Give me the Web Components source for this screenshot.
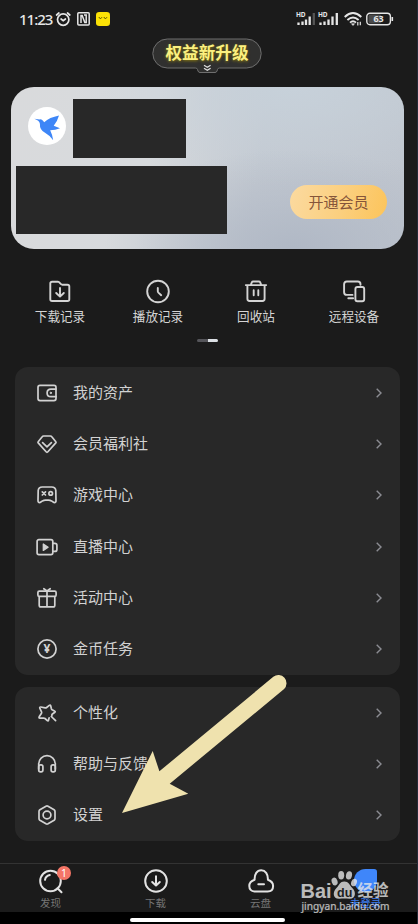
<!DOCTYPE html>
<html lang="zh-CN">
<head>
<meta charset="utf-8">
<title>我的</title>
<style>
body {
    margin: 0;
    background: #1b1b1b;
}
</style>
</head>
<body>
<profile-page></profile-page>

<script>
const ICONS = {
    folder: '<path d="M2.3 3.5q0-1.8 1.8-1.8h5.6q.8 0 1.3.5l2 2q.5.5 1.3.5h5.2q1.8 0 1.8 1.8v12.7q0 1.8-1.8 1.8H4.1q-1.8 0-1.8-1.8z"/><path d="M12 8v8.4M8.2 13l3.8 3.6 3.8-3.6"/>',
    clock: '<circle cx="12" cy="11.5" r="10.8"/><path d="M11.8 8v3.2q0 .8.6 1.4l2.8 2.6"/>',
    trash: '<path d="M1.8 5.1h20.4M6.8 4.8l1-2.4q.4-.9 1.4-.9h5.6q1 0 1.4.9l1 2.4M3.4 5.4v13.4q0 2.2 2.2 2.2h12.8q2.2 0 2.2-2.2V5.4M9.7 10.3v5M14.3 10.3v5"/>',
    devices: '<path d="M10.5 14.9H4.8q-2.7 0-2.7-2.7v-8q0-2.7 2.7-2.7h11q2.7 0 2.7 2.7v.6M6.3 18.2h4.8"/><rect x="13.4" y="7" width="8.8" height="14.2" rx="2"/>',
    wallet: '<rect x="3" y="4.4" width="18" height="15.2" rx="2"/><path d="M21 8.1h-5q-3.9 0-3.9 3.8t3.9 3.8h5"/><circle cx="15.8" cy="11.9" r=".7" fill="currentColor" stroke-width="1"/>',
    diamond: '<path d="M8.6 4h6.8q.9 0 1.4.7l4 5q.5.6 0 1.2l-7.9 8.9q-.9 1-1.8 0l-7.9-8.9q-.5-.6 0-1.2l4-5q.5-.7 1.4-.7zM7.6 10.7l4.4 4.1 4.4-4.1"/>',
    game: '<path d="M7.2 4h9.6q3.5 0 4 3.4l.2 10q.1 2.600-2.100 2.100l-2.400-1.600q-1.400-.8-3-.8h-3q-1.600 0-3 .8l-2.400 1.600q-2.200.5-2.100-2.100l.2-10Q3.700 4 7.200 4z"/><path d="M7.300 8.800l3.200 3.200M10.500 8.800L7.300 12" stroke-width="1.700"/><circle cx="15.700" cy="10.400" r="1.800" stroke-width="1.700"/>',
    live: '<rect x="2.1" y="4.600" width="15.700" height="15" rx="1.800"/><path d="M18 8.400h1.900q2 0 2 2v4q0 2-2 2H18"/><path d="M8.300 9v6.400l4.800-3.200z" fill="currentColor" stroke-width="1.300"/>',
    gift: '<rect x="2.900" y="5.200" width="18.200" height="5.200" rx="1.400"/><path d="M4.200 10.600v8.600q0 1.700 1.700 1.700h12.200q1.700 0 1.700-1.700v-8.600M12 5.500v15.200M8.800 2.700L12 5l3.200-2.300"/>',
    coin: '<circle cx="12" cy="12" r="9.100"/><text x="12" y="16.300" text-anchor="middle" font-family="Noto Sans, sans-serif" font-size="12" font-weight="700" fill="currentColor" stroke="none">¥</text>',
    star: '<path d="M16.900 14.600Q16.700 13.600 17.400 13L19.900 11.200Q20.600 10.600 19.800 10.200L17.200 8.800Q16.600 8.400 16.400 7.700L15.700 4.700Q15.300 3.500 14.300 4.300L11.600 6.500Q11 7 10.200 6.900L5.800 6Q4.400 5.900 4.800 7.100L6.500 10.800Q6.800 11.500 6.500 12.200L4.200 15.800Q3.600 17 4.900 17.100L8.600 17Q9.400 17 10 17.500L12.300 19.600Q13.200 20.300 13.500 19.200L14.100 16.900M16.300 15.500l4.300 4.200"/>',
    headset: '<path d="M3.700 17v-5a8.300 8.300 0 0 1 16.600 0v5"/><rect x="3.700" y="12.900" width="4.200" height="7" rx="1.800"/><rect x="16.100" y="12.900" width="4.200" height="7" rx="1.800"/>',
    setting: '<path d="M11 3.200q1-.5 2 0l6.100 3.500q.9.600.9 1.700v7.200q0 1.100-.9 1.700L13 20.800q-1 .5-2 0l-6.100-3.500q-.9-.6-.9-1.700V8.400q0-1.100.9-1.700z"/><circle cx="12" cy="12" r="3.900"/>',
    discover: '<circle cx="11.500" cy="12" r="10.300"/><path d="M18.500 19.300l4 4M6 10.800q.6-3.800 4.800-4.800"/>',
    download: '<circle cx="12" cy="12" r="10.800"/><path d="M12 7.200v9.200M8.200 13l3.800 3.600 3.800-3.600"/>',
    cloud: '<path d="M5.600 10.700C5.400 4.900 8 1.300 12.200 1.300s6.900 3.600 6.700 9.400c3.300 1.200 5.200 3.200 5.200 6.200 0 3.500-2.300 5.500-5.500 5.500H5.400C2.200 22.400.300 20.200.300 17c0-3.200 2-5.200 5.300-6.300z"/><path d="M9.300 15.200h5.700"/>',
};

class LineIcon extends HTMLElement {
    connectedCallback() {
        this.attachShadow({ mode: 'open' });
        this.shadowRoot.innerHTML = `
        <style>
            :host {
                display: block;
                width: 24px;
                height: 24px;
                flex: none;
            }
            svg {
                display: block;
                overflow: visible;
                fill: none;
                stroke: currentColor;
                stroke-width: ${this.getAttribute('weight') || 1.7};
                stroke-linecap: round;
                stroke-linejoin: round;
            }
        </style>
        <svg width="24" height="24" viewBox="0 0 24 24">${ICONS[this.getAttribute('name')]}</svg>
        `;
    }
}

class StatusBar extends HTMLElement {
    constructor() {
        super();
        this.attachShadow({ mode: 'open' });
    }

    connectedCallback() {
        this.shadowRoot.innerHTML = `
        <style>
            :host {
                display: flex;
                align-items: center;
                justify-content: space-between;
                box-sizing: border-box;
                height: 38px;
                padding: 0 23px 0 19px;
                color: #e6e6e6;
            }
            div {
                display: flex;
                align-items: center;
            }
            .time {
                font: 500 15px/20px "Noto Sans", sans-serif;
                letter-spacing: -1px;
                width: 36px;
                white-space: nowrap;
            }
            svg {
                display: block;
                overflow: visible;
                fill: none;
                stroke: currentColor;
            }
            .nfc { margin-left: 6px; }
            .app { margin-left: 6px; }
            .right { gap: 4.5px; }
            text {
                font: 700 6.5px "Noto Sans", sans-serif;
                fill: currentColor;
                stroke: none;
            }
            .level {
                font-size: 9px;
            }
        </style>
        <div>
            <span class="time">11:23</span>
            <svg width="16" height="16" viewBox="0 0 16 16" stroke-width="1.7" stroke-linecap="round">
                <circle cx="8.2" cy="8.6" r="5.7"/>
                <path d="M1.6 4l2.3-2M14.8 4l-2.3-2M6.1 8l2.1 1.6 2.2-1.6"/>
            </svg>
            <svg class="nfc" width="13" height="14" viewBox="0 0 13 14" stroke-width="1.5">
                <rect x=".8" y=".8" width="11.4" height="12.2" rx="1"/>
                <path d="M4 11V3.600h1.200l2.600 6.800H9.200V3H7"/>
            </svg>
            <svg class="app" width="14" height="14" viewBox="0 0 14 14">
                <rect width="14" height="14" rx="3.2" fill="#fbe106" stroke="none"/>
                <path d="M2.800 5l1.600 1.900L6 5.200M7.800 5l1.600 1.900L11 5.200" stroke="#5b5200"/>
            </svg>
        </div>
        <div class="right">
            <svg width="18" height="14" viewBox="0 0 18 14">
                <text x="-1" y="5" textLength="9.5">HD</text>
                <path d="M1.500 13v-2.500M5.500 13V9.500M9 13V7.500M12.700 13V4.500" stroke-width="2.3"/>
                <path d="M16.800 13V1" stroke-width="2.3" stroke="#555"/>
            </svg>
            <svg width="20" height="14" viewBox="0 0 20 14">
                <text x="-1" y="5" textLength="9.5">HD</text>
                <path d="M1.500 13v-2.500M5.500 13V9.500M9.500 13V7.500M13.500 13V4.500M17.800 13V1" stroke-width="2.3"/>
            </svg>
            <svg width="18" height="14" viewBox="0 0 18 14" stroke-width="1.9">
                <path d="M.7 5q8.300-7.800 16.600 0M3.400 8q5.600-5 11.200 0M6 10.600q3-2.600 6 0"/>
                <path d="M7.400 11.700h3.200L9 13.600z" fill="currentColor" stroke-width=".5"/>
                <path d="M13.800 10v3.500M16.300 9.800v3.500" stroke-width="1.2"/>
            </svg>
            <svg width="28" height="14" viewBox="0 0 28 14">
                <rect x="2.500" y="2.500" width="13" height="9" rx="2" fill="#4a4a4a" stroke="none"/>
                <rect x=".8" y="1.300" width="23.600" height="11.400" rx="3.200" stroke-width="1.4"/>
                <path d="M26.300 5v4" stroke-width="1.6"/>
                <text class="level" x="12.600" y="10.300" text-anchor="middle">63</text>
            </svg>
        </div>
        `;
    }
}

class PromoPill extends HTMLElement {
    constructor() {
        super();
        this.attachShadow({ mode: 'open' });
    }

    connectedCallback() {
        this.shadowRoot.innerHTML = `
        <style>
            :host {
                display: grid;
                justify-content: center;
                height: 49px;
                margin-right: 3px;
            }
            svg, span {
                grid-area: 1 / 1;
            }
            span {
                font: 700 16.6px/29px "Noto Sans CJK SC", sans-serif;
                color: #fbf080;
                text-align: center;
                text-shadow: 0 1px 3px #8a7a10;
                z-index: 1;
            }
        </style>
        <svg width="110" height="36" viewBox="0 0 110 36" fill="none">
            <path d="M15.300 1h79.400a14.500 14.500 0 0 1 0 29H67.500q-1.500 0-2 1.500l-.5 1.500q-.5 1.500-2 1.500H48q-1.500 0-2-1.500l-.5-1.500q-.5-1.500-2-1.500H15.300a14.500 14.500 0 0 1 0-29z" fill="#30302f" stroke="#6f6f6f"/>
            <path d="M52 27.300l3.300 2 3.300-2M52 30.300l3.300 2 3.300-2" stroke="#ddd" stroke-width="1.3"/>
        </svg>
        <span><slot></slot></span>
        `;
    }
}

class MemberCard extends HTMLElement {
    constructor() {
        super();
        this.attachShadow({ mode: 'open' });
    }

    connectedCallback() {
        this.shadowRoot.innerHTML = `
        <style>
            :host {
                display: flex;
                justify-content: space-between;
                box-sizing: border-box;
                width: 393px;
                height: 162px;
                margin-left: 11px;
                padding: 12px 17px 0 5px;
                border-radius: 23px;
                background:
                    radial-gradient(ellipse 190px 100px at 72% 100%, #b0b8c5 0%, #b0b8c500 100%),
                    radial-gradient(ellipse 220px 100px at 72% 0%, #c7d1da 0%, #c7d1da00 100%),
                    linear-gradient(100deg, #d9dadc 0%, #d7dadd 36%, #c3c9d1 62%, #bfc5ce 100%);
            }
            .user {
                display: flex;
                gap: 7px;
                padding-left: 12px;
            }
            .avatar {
                width: 38px;
                height: 38px;
                margin-top: 8px;
                border-radius: 50%;
                background: #fff;
            }
            .name {
                width: 113px;
                height: 59px;
                background: #282828;
            }
            .info {
                width: 211px;
                height: 68px;
                margin-top: 8px;
                background: #282828;
            }
            button {
                align-self: flex-start;
                width: 97px;
                height: 34px;
                margin-top: 86px;
                padding: 0;
                border: 0;
                border-radius: 17px;
                background: linear-gradient(105deg, #fbdaa0, #fbcf7e 55%, #fcc45a);
                color: #85553a;
                font: 400 15px/32px "Noto Sans CJK SC", sans-serif;
            }
        </style>
        <div>
            <div class="user">
                <svg class="avatar" viewBox="0 0 38 38">
                    <path fill="#3e86f7" d="M6.300 11.800l5.200.6q2.500-.4 3.700 1.600l1 1.200q5.200-4.800 14.800-6.700-1.600 5.900-5.300 10.200l6.300 2.600q-4.600 1.800-9.800 2 2.400 4.900 3 10-3.600-4.900-7.800-7.200-6-3.200-5.500-9.400Q11.200 13.400 6.300 11.800z"/>
                </svg>
                <div class="name"></div>
            </div>
            <div class="info"></div>
        </div>
        <button><slot></slot></button>
        `;
    }
}

class QuickAction extends HTMLElement {
    connectedCallback() {
        this.attachShadow({ mode: 'open' });
        this.shadowRoot.innerHTML = `
        <style>
            :host {
                display: flex;
                flex-direction: column;
                align-items: center;
                gap: 2px;
                color: #d4d4d4;
                font: 400 12.6px/20px "Noto Sans CJK SC", sans-serif;
            }
            span {
                padding-bottom: 1px;
            }
        </style>
        <line-icon name="${this.getAttribute('icon')}" weight="1.9"></line-icon>
        <span><slot></slot></span>
        `;
    }
}

class MenuGroup extends HTMLElement {
    constructor() {
        super();
        this.attachShadow({ mode: 'open' });
    }

    connectedCallback() {
        this.shadowRoot.innerHTML = `
        <style>
            :host {
                display: block;
                width: 385px;
                margin-left: 15px;
                border-radius: 13px;
                background: #282828;
            }
        </style>
        <slot></slot>
        `;
    }
}

class MenuItem extends HTMLElement {
    connectedCallback() {
        this.attachShadow({ mode: 'open' });
        this.shadowRoot.innerHTML = `
        <style>
            :host {
                display: flex;
                align-items: center;
                height: 51.2px;
                padding: 0 18px 0 20px;
                color: #d2d2d2;
                font: 400 15px/22px "Noto Sans CJK SC", sans-serif;
            }
            span {
                flex: 1;
                margin-left: 14px;
                padding-bottom: 2px;
            }
        </style>
        <line-icon name="${this.getAttribute('icon')}"></line-icon>
        <span><slot></slot></span>
        <svg width="6" height="10" viewBox="0 0 6 10" fill="none" stroke="#8b8c92" stroke-width="1.4"><path d="M.7.7L5 5 .7 9.300"/></svg>
        `;
    }
}

class TabItem extends HTMLElement {
    connectedCallback() {
        const icon = this.getAttribute('icon');
        const badge = this.getAttribute('badge');
        this.attachShadow({ mode: 'open' });
        this.shadowRoot.innerHTML = `
        <style>
            :host {
                display: flex;
                flex-direction: column;
                align-items: center;
                position: relative;
                padding-top: 5px;
                color: #e3e3e3;
            }
            span {
                margin-top: 1px;
                color: #757575;
                font: 400 10.5px/18px "Noto Sans CJK SC", sans-serif;
            }
            :host([active]) span {
                color: #3e7ff0;
            }
            .face {
                width: 23px;
                height: 23px;
                margin: 0 0 1px;
                border-radius: 12px 3px 12px 12px;
                background: #3f86fa;
            }
            b {
                position: absolute;
                left: calc(50% + 6.5px);
                top: 2px;
                width: 14px;
                height: 14px;
                border-radius: 50%;
                background: #f57667;
                color: #fff;
                font: 400 10.5px/14px "Noto Sans", sans-serif;
                text-align: center;
            }
        </style>
        ${icon ? `<line-icon name="${icon}" weight="2"></line-icon>` : '<div class="face"></div>'}
        <span><slot></slot></span>
        ${badge ? `<b>${badge}</b>` : ''}
        `;
    }
}

class PointerArrow extends HTMLElement {
    constructor() {
        super();
        this.attachShadow({ mode: 'open' });
    }

    connectedCallback() {
        this.shadowRoot.innerHTML = `
        <style>
            :host {
                display: block;
                position: absolute;
                left: 122px;
                top: 674px;
            }
            svg { display: block; }
        </style>
        <svg width="166" height="140" viewBox="0 0 166 140">
            <path fill="#efe2ae" d="M0 139L30.700 77l6.700 20.300L151.300 2.800a8.200 8.200 0 0 1 10.800 12.300L47.700 109.700l18.600 10z"/>
        </svg>
        `;
    }
}

class SiteMark extends HTMLElement {
    constructor() {
        super();
        this.attachShadow({ mode: 'open' });
    }

    connectedCallback() {
        this.shadowRoot.innerHTML = `
        <style>
            :host {
                display: block;
                position: absolute;
                left: 300px;
                top: 868px;
                opacity: .78;
            }
            svg { display: block; }
            text { fill: #e8e8e8; }
            .bai { font: 700 21px "Liberation Sans", sans-serif; }
            .du { font: 700 12.5px "Liberation Sans", sans-serif; fill: #222; }
            .cn { font: 700 15.5px "Noto Sans CJK SC", sans-serif; }
            .url { font: 400 11px "Noto Sans", sans-serif; stroke: #e8e8e8; stroke-width: .2px; }
        </style>
        <svg width="92" height="46" viewBox="0 0 92 46">
            <text class="bai" x="0.5" y="30" textLength="31" lengthAdjust="spacingAndGlyphs">Bai</text>
            <g fill="#e8e8e8">
                <ellipse cx="34.600" cy="13.500" rx="2.900" ry="4" transform="rotate(-18 34.600 13.500)"/>
                <ellipse cx="41.200" cy="7.200" rx="3" ry="4.200"/>
                <ellipse cx="49" cy="7.400" rx="3" ry="4.200" transform="rotate(12 49 7.400)"/>
                <ellipse cx="54" cy="14.500" rx="2.800" ry="3.900" transform="rotate(20 54 14.500)"/>
                <path d="M44.300 13.500c4.500 0 5 3.500 7.800 6.200 4.800 4.500 3.200 11.500-2.800 11.100-3.300-.4-6.500-.4-9.800 0-6.500.4-7.500-6.800-2.800-11.100 2.900-2.700 3.100-6.200 7.600-6.200z"/>
            </g>
            <text class="du" x="37" y="28.500">du</text>
            <text class="cn" x="57.500" y="28" textLength="31" lengthAdjust="spacingAndGlyphs">经验</text>
            <text class="url" x="1.500" y="41.500" textLength="88" lengthAdjust="spacingAndGlyphs">jingyan.baidu.com</text>
        </svg>
        `;
    }
}

class ProfilePage extends HTMLElement {
    constructor() {
        super();
        this.attachShadow({ mode: 'open' });
    }

    connectedCallback() {
        this.shadowRoot.innerHTML = `
        <style>
            :host {
                display: flex;
                flex-direction: column;
                position: relative;
                box-sizing: border-box;
                width: 418px;
                height: 924px;
                overflow: hidden;
                border-right: 1px solid #242a38;
                background: #1b1b1b;
            }
            .actions {
                display: grid;
                grid-template-columns: repeat(4, 98px);
                margin: 31px 0 0 11px;
            }
            .pager {
                align-self: flex-start;
                width: 21px;
                height: 3px;
                margin: 12px 0 25.4px 197px;
                border-radius: 2px;
                background: linear-gradient(90deg, #55555a 50%, #dce0e5 50%);
            }
            menu-group + menu-group {
                margin-top: 12.5px;
            }
            nav {
                display: grid;
                grid-template-columns: repeat(4, 1fr);
                width: 420px;
                height: 48px;
                margin: auto 0 0 -2px;
                border-top: 1px solid #333;
            }
            footer {
                display: flex;
                flex: none;
                height: 12px;
                background: #000;
            }
            .home {
                width: 155px;
                height: 4px;
                margin: 6px 0 0 130px;
                border-radius: 2px;
                background: #fff;
            }
        </style>
        <status-bar></status-bar>
        <promo-pill>权益新升级</promo-pill>
        <member-card>开通会员</member-card>
        <div class="actions">
            <quick-action icon="folder">下载记录</quick-action>
            <quick-action icon="clock">播放记录</quick-action>
            <quick-action icon="trash">回收站</quick-action>
            <quick-action icon="devices">远程设备</quick-action>
        </div>
        <div class="pager"></div>
        <menu-group>
            <menu-item icon="wallet">我的资产</menu-item>
            <menu-item icon="diamond">会员福利社</menu-item>
            <menu-item icon="game">游戏中心</menu-item>
            <menu-item icon="live">直播中心</menu-item>
            <menu-item icon="gift">活动中心</menu-item>
            <menu-item icon="coin">金币任务</menu-item>
        </menu-group>
        <menu-group>
            <menu-item icon="star">个性化</menu-item>
            <menu-item icon="headset">帮助与反馈</menu-item>
            <menu-item icon="setting">设置</menu-item>
        </menu-group>
        <nav>
            <tab-item icon="discover" badge="1">发现</tab-item>
            <tab-item icon="download">下载</tab-item>
            <tab-item icon="cloud">云盘</tab-item>
            <tab-item active>未登录</tab-item>
        </nav>
        <footer><div class="home"></div></footer>
        <pointer-arrow></pointer-arrow>
        <site-mark></site-mark>
        `;
    }
}

customElements.define('line-icon', LineIcon);
customElements.define('status-bar', StatusBar);
customElements.define('promo-pill', PromoPill);
customElements.define('member-card', MemberCard);
customElements.define('quick-action', QuickAction);
customElements.define('menu-group', MenuGroup);
customElements.define('menu-item', MenuItem);
customElements.define('tab-item', TabItem);
customElements.define('pointer-arrow', PointerArrow);
customElements.define('site-mark', SiteMark);
customElements.define('profile-page', ProfilePage);
</script>
</body>
</html>
